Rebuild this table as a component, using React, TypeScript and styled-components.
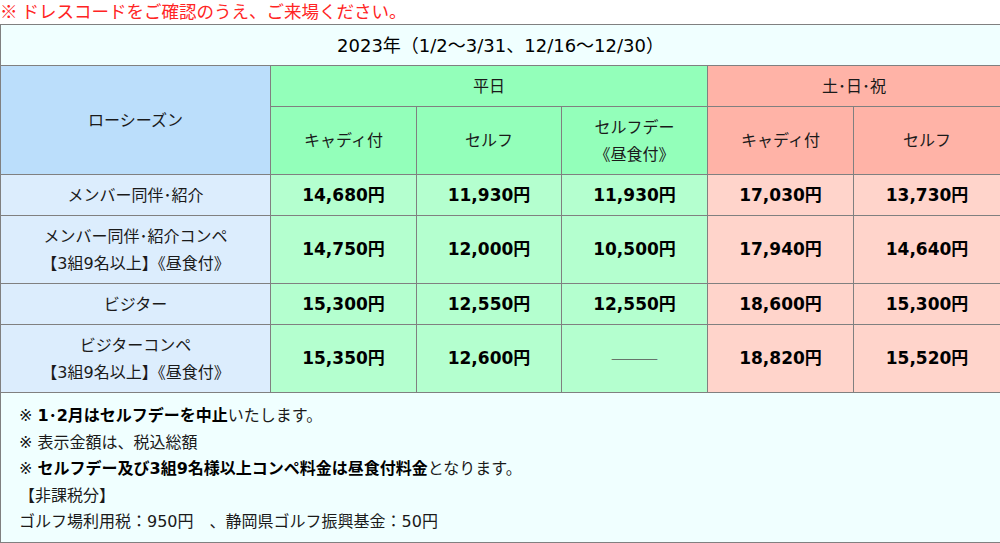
import styled, { createGlobalStyle } from "styled-components";

const GlobalStyle = createGlobalStyle`
  body {
    margin: 0;
    background: #fff;
    color: #111;
    font-family: "DejaVu Sans", "Noto Sans CJK JP", sans-serif;
  }
`;

type Tone = "caption" | "season" | "weekday" | "weekend" | "label" | "weekdayData" | "weekendData";

const tones: Record<Tone, string> = {
  caption: "#f0ffff",
  season: "#bbdefb",
  weekday: "#93ffba",
  weekend: "#ffb3a7",
  label: "#dcedfd",
  weekdayData: "#b4ffcf",
  weekendData: "#ffd4cb",
};

const Page = styled.div`
  width: 1000px;
`;

const Notice = styled.p`
  margin: 0;
  height: 24px;
  color: #ff2424;
  font-size: 17.5px;
  line-height: 22px;
  font-family: "Noto Sans CJK JP", sans-serif;
`;

const Table = styled.table`
  width: 1000px;
  border-collapse: collapse;
  table-layout: fixed;
  font-size: 16px;
  line-height: 27px;
`;

const Col = styled.col<{ $w: number }>`
  width: ${(p) => p.$w}px;
`;

const Cell = styled.td<{ $tone: Tone; $bold?: boolean }>`
  border: 1px solid #808080;
  padding: 6.5px 4px;
  text-align: center;
  vertical-align: middle;
  background: ${(p) => tones[p.$tone]};
  font-weight: ${(p) => (p.$bold ? 700 : 400)};
  font-size: ${(p) => (p.$bold ? "17px" : "16px")};
  color: ${(p) => (p.$bold ? "#000" : "#1a1a1a")};
`;

const CaptionCell = styled(Cell)`
  font-size: 18px;
  color: #000;
`;

const Dash = styled.span`
  color: #555;
  font-size: 16px;
  font-family: "Noto Sans CJK JP", sans-serif;
  font-weight: 400;
`;

const Footer = styled.td`
  border: 1px solid #808080;
  background: #f0ffff;
  padding: 10px 18px 6px;
  text-align: left;
  line-height: 26.6px;
  color: #1a1a1a;
`;

const Strong = styled.b`
  font-weight: 700;
  color: #000;
`;

const rows: { label: string[]; prices: (string | null)[] }[] = [
  { label: ["メンバー同伴･紹介"], prices: ["14,680円", "11,930円", "11,930円", "17,030円", "13,730円"] },
  {
    label: ["メンバー同伴･紹介コンペ", "【3組9名以上】《昼食付》"],
    prices: ["14,750円", "12,000円", "10,500円", "17,940円", "14,640円"],
  },
  { label: ["ビジター"], prices: ["15,300円", "12,550円", "12,550円", "18,600円", "15,300円"] },
  {
    label: ["ビジターコンペ", "【3組9名以上】《昼食付》"],
    prices: ["15,350円", "12,600円", null, "18,820円", "15,520円"],
  },
];

function Lines({ items }: { items: string[] }) {
  return (
    <>
      {items.map((t, i) => (
        <span key={i}>
          {i > 0 && <br />}
          {t}
        </span>
      ))}
    </>
  );
}

export default function App() {
  return (
    <Page>
      <GlobalStyle />
      <Notice>※ ドレスコードをご確認のうえ、ご来場ください。</Notice>
      <Table>
        <colgroup>
          <Col $w={270} />
          <Col $w={146} />
          <Col $w={145} />
          <Col $w={146} />
          <Col $w={146} />
          <Col $w={147} />
        </colgroup>
        <thead>
          <tr>
            <CaptionCell as="th" colSpan={6} $tone="caption">
              2023年（1/2～3/31、12/16～12/30）
            </CaptionCell>
          </tr>
          <tr>
            <Cell as="th" rowSpan={2} $tone="season">
              ローシーズン
            </Cell>
            <Cell as="th" colSpan={3} $tone="weekday">
              平日
            </Cell>
            <Cell as="th" colSpan={2} $tone="weekend">
              土･日･祝
            </Cell>
          </tr>
          <tr>
            <Cell as="th" $tone="weekday">キャディ付</Cell>
            <Cell as="th" $tone="weekday">セルフ</Cell>
            <Cell as="th" $tone="weekday">
              <Lines items={["セルフデー", "《昼食付》"]} />
            </Cell>
            <Cell as="th" $tone="weekend">キャディ付</Cell>
            <Cell as="th" $tone="weekend">セルフ</Cell>
          </tr>
        </thead>
        <tbody>
          {rows.map((r, i) => (
            <tr key={i}>
              <Cell $tone="label">
                <Lines items={r.label} />
              </Cell>
              {r.prices.map((p, j) => (
                <Cell key={j} $tone={j < 3 ? "weekdayData" : "weekendData"} $bold={p !== null}>
                  {p ?? <Dash>―――</Dash>}
                </Cell>
              ))}
            </tr>
          ))}
          <tr>
            <Footer colSpan={6}>
              ※ <Strong>1･2月はセルフデーを中止</Strong>いたします。
              <br />※ 表示金額は、税込総額
              <br />※ <Strong>セルフデー及び3組9名様以上コンペ料金は昼食付料金</Strong>となります。
              <br />【非課税分】
              <br />ゴルフ場利用税：950円　、静岡県ゴルフ振興基金：50円
            </Footer>
          </tr>
        </tbody>
      </Table>
    </Page>
  );
}
